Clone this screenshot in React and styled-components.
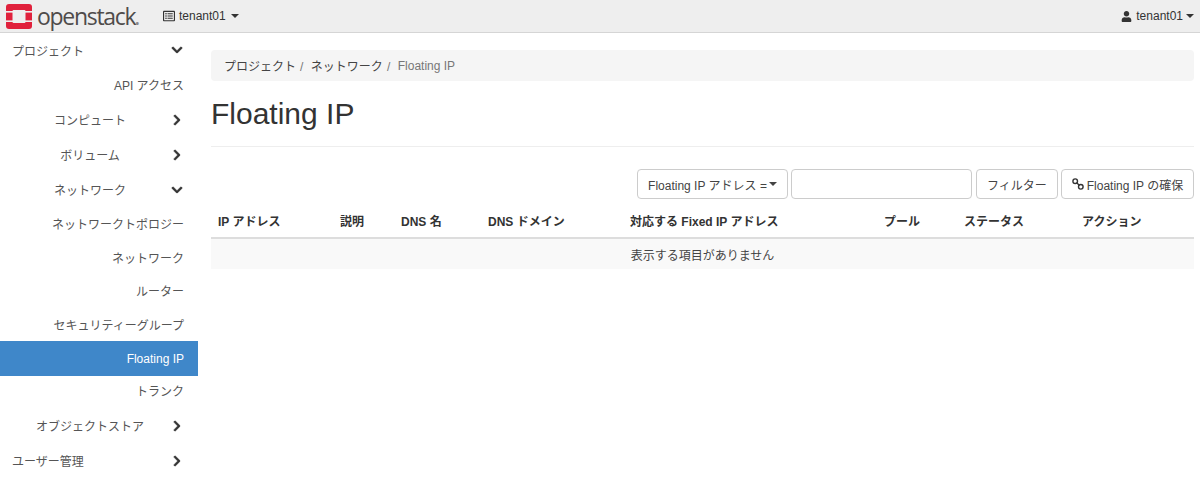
import React from "react";
import styled, { createGlobalStyle } from "styled-components";
import { FaChevronDown, FaChevronRight, FaRegListAlt, FaUser } from "react-icons/fa";

const GlobalStyle = createGlobalStyle`
  html, body {
    margin: 0;
    padding: 0;
    background: #fff;
  }
  body {
    font-family: "Liberation Sans", "Noto Sans CJK JP", sans-serif;
    font-size: 12px;
    color: #333;
  }
  * {
    box-sizing: border-box;
  }
`;

const Page = styled.div`
  width: 1200px;
  height: 484px;
  overflow: hidden;
`;

const Navbar = styled.header`
  display: flex;
  align-items: center;
  height: 33px;
  padding: 0 6px;
  background: #eeeeee;
  border-bottom: 1px solid #d5d5d5;
`;

const Brand = styled.div`
  display: flex;
  align-items: center;
  gap: 5px;
  width: 157px;
  font-family: "Open Sans", sans-serif;
  font-size: 23px;
  font-weight: 500;
  letter-spacing: -1.3px;
  color: #4f4b4a;
`;

const BrandDot = styled.span`
  margin-left: -1px;
  color: #8a8685;
`;

const NavToggle = styled.div`
  display: flex;
  align-items: center;
  gap: 4px;
  color: #333;

  svg {
    font-size: 12px;
  }
`;

const Caret = styled.span`
  display: inline-block;
  margin-left: ${(p) => p.$gap || 0}px;
  border-top: 4px solid currentColor;
  border-left: 4px solid transparent;
  border-right: 4px solid transparent;
`;

const NavRight = styled(NavToggle)`
  margin-left: auto;

  svg {
    font-size: 11px;
  }
`;

const Body = styled.div`
  display: flex;
`;

const Sidebar = styled.nav`
  width: 198px;
  flex-shrink: 0;
`;

const GroupRow = styled.div`
  display: flex;
  align-items: center;
  gap: 3px;
  height: ${(p) => p.$height || 35}px;
  padding-left: 12px;
  color: #555;

  svg {
    font-size: 12px;
    color: #333;
    stroke: currentColor;
    stroke-width: 25px;
  }
`;

const GroupLabel = styled.span`
  width: 156px;
  text-align: ${(p) => (p.$top ? "left" : "center")};
  white-space: nowrap;
`;

const LeafRow = styled.div`
  display: flex;
  align-items: center;
  justify-content: flex-end;
  height: ${(p) => (p.$active ? 35 : p.$height || 33.5)}px;
  padding-right: 14px;
  padding-bottom: ${(p) => p.$lift || 0}px;
  color: ${(p) => (p.$active ? "#fff" : "#555")};
  background: ${(p) => (p.$active ? "#3f87c9" : "transparent")};
`;

const Main = styled.main`
  flex: 1;
  padding: 17px 6px 0 13px;
`;

const Breadcrumb = styled.ol`
  display: flex;
  align-items: center;
  height: 31px;
  margin: 0;
  padding: 0 13px;
  list-style: none;
  background: #f5f5f5;
  border-radius: 4px;
`;

const Crumb = styled.li`
  color: ${(p) => (p.$current ? "#777" : "#444")};

  &:not(:last-child)::after {
    content: "/";
    padding: 0 7.5px 0 4px;
    color: #777;
  }
`;

const PageHeader = styled.div`
  height: 66px;
  padding-top: 15px;
  border-bottom: 1px solid #eeeeee;
`;

const Title = styled.h1`
  margin: 0;
  font-size: 30px;
  font-weight: 400;
  line-height: 36px;
  color: #333;
`;

const Toolbar = styled.div`
  display: flex;
  justify-content: flex-end;
  gap: 3px;
  margin-top: 22px;
`;

const Button = styled.button`
  display: flex;
  align-items: center;
  justify-content: center;
  width: ${(p) => p.$width}px;
  height: 30px;
  padding: 0;
  font: inherit;
  color: #444;
  background: #fff;
  border: 1px solid #ccc;
  border-radius: 4px;
`;

const FilterInput = styled.input`
  width: 181px;
  height: 30px;
  margin-right: 1px;
  border: 1px solid #ccc;
  border-radius: 4px;
  background: #fff;
`;

const LinkIcon = styled.svg`
  width: 12px;
  height: 12px;
  margin-right: 3px;
`;

const Table = styled.table`
  width: 100%;
  margin-top: 5px;
  border-collapse: collapse;
  table-layout: fixed;
`;

const HeadCell = styled.th`
  width: ${(p) => p.$width}px;
  height: 34px;
  padding: 0 7px;
  text-align: left;
  font-weight: 700;
  color: #333;
  border-bottom: 2px solid #dddddd;
`;

const EmptyCell = styled.td`
  height: 31px;
  text-align: center;
  color: #444;
  background: #f9f9f9;
`;

const columns = [
  { label: "IP アドレス", width: 122 },
  { label: "説明", width: 61 },
  { label: "DNS 名", width: 87 },
  { label: "DNS ドメイン", width: 142 },
  { label: "対応する Fixed IP アドレス", width: 254 },
  { label: "プール", width: 80 },
  { label: "ステータス", width: 118 },
  { label: "アクション", width: 119 },
];

function Logo() {
  return (
    <svg width="26" height="25" viewBox="0 0 26 25" aria-hidden="true">
      <rect width="26" height="25" rx="3" fill="#e0213c" />
      <rect x="6.5" y="6" width="13" height="13" rx="1" fill="#eeeeee" />
      <rect x="0" y="7" width="7" height="1.6" fill="#eeeeee" />
      <rect x="0" y="16.4" width="7" height="1.6" fill="#eeeeee" />
      <rect x="19" y="7" width="7" height="1.6" fill="#eeeeee" />
      <rect x="19" y="16.4" width="7" height="1.6" fill="#eeeeee" />
    </svg>
  );
}

function App() {
  return (
    <Page>
      <GlobalStyle />
      <Navbar>
        <Brand>
          <Logo />
          <span>
            openstack<BrandDot>.</BrandDot>
          </span>
        </Brand>
        <NavToggle>
          <FaRegListAlt />
          tenant01
          <Caret $gap={1} />
        </NavToggle>
        <NavRight>
          <FaUser />
          tenant01
          <Caret $gap={-1} />
        </NavRight>
      </Navbar>
      <Body>
        <Sidebar>
          <GroupRow $height={34}>
            <GroupLabel $top>プロジェクト</GroupLabel>
            <FaChevronDown />
          </GroupRow>
          <LeafRow $height={35}>API アクセス</LeafRow>
          <GroupRow>
            <GroupLabel>コンピュート</GroupLabel>
            <FaChevronRight />
          </GroupRow>
          <GroupRow>
            <GroupLabel>ボリューム</GroupLabel>
            <FaChevronRight />
          </GroupRow>
          <GroupRow>
            <GroupLabel>ネットワーク</GroupLabel>
            <FaChevronDown />
          </GroupRow>
          <LeafRow>ネットワークトポロジー</LeafRow>
          <LeafRow>ネットワーク</LeafRow>
          <LeafRow>ルーター</LeafRow>
          <LeafRow>セキュリティーグループ</LeafRow>
          <LeafRow $active>Floating IP</LeafRow>
          <LeafRow $height={32} $lift={3}>トランク</LeafRow>
          <GroupRow>
            <GroupLabel>オブジェクトストア</GroupLabel>
            <FaChevronRight />
          </GroupRow>
          <GroupRow>
            <GroupLabel $top>ユーザー管理</GroupLabel>
            <FaChevronRight />
          </GroupRow>
        </Sidebar>
        <Main>
          <Breadcrumb>
            <Crumb>プロジェクト</Crumb>
            <Crumb>ネットワーク</Crumb>
            <Crumb $current>Floating IP</Crumb>
          </Breadcrumb>
          <PageHeader>
            <Title>Floating IP</Title>
          </PageHeader>
          <Toolbar>
            <Button $width={151}>
              Floating IP アドレス =<Caret $gap={2} />
            </Button>
            <FilterInput />
            <Button $width={82}>フィルター</Button>
            <Button $width={133}>
              <LinkIcon viewBox="0 0 12 12" aria-hidden="true">
                <circle cx="3.2" cy="3.2" r="2.3" fill="none" stroke="#333" strokeWidth="1.4" />
                <circle cx="8.8" cy="8.8" r="2.3" fill="none" stroke="#333" strokeWidth="1.4" />
                <path d="M4.6 4.6 L7.4 7.4" stroke="#333" strokeWidth="1.4" />
              </LinkIcon>
              Floating IP の確保
            </Button>
          </Toolbar>
          <Table>
            <thead>
              <tr>
                {columns.map((col) => (
                  <HeadCell key={col.label} $width={col.width}>
                    {col.label}
                  </HeadCell>
                ))}
              </tr>
            </thead>
            <tbody>
              <tr>
                <EmptyCell colSpan={columns.length}>表示する項目がありません</EmptyCell>
              </tr>
            </tbody>
          </Table>
        </Main>
      </Body>
    </Page>
  );
}

export default App;
